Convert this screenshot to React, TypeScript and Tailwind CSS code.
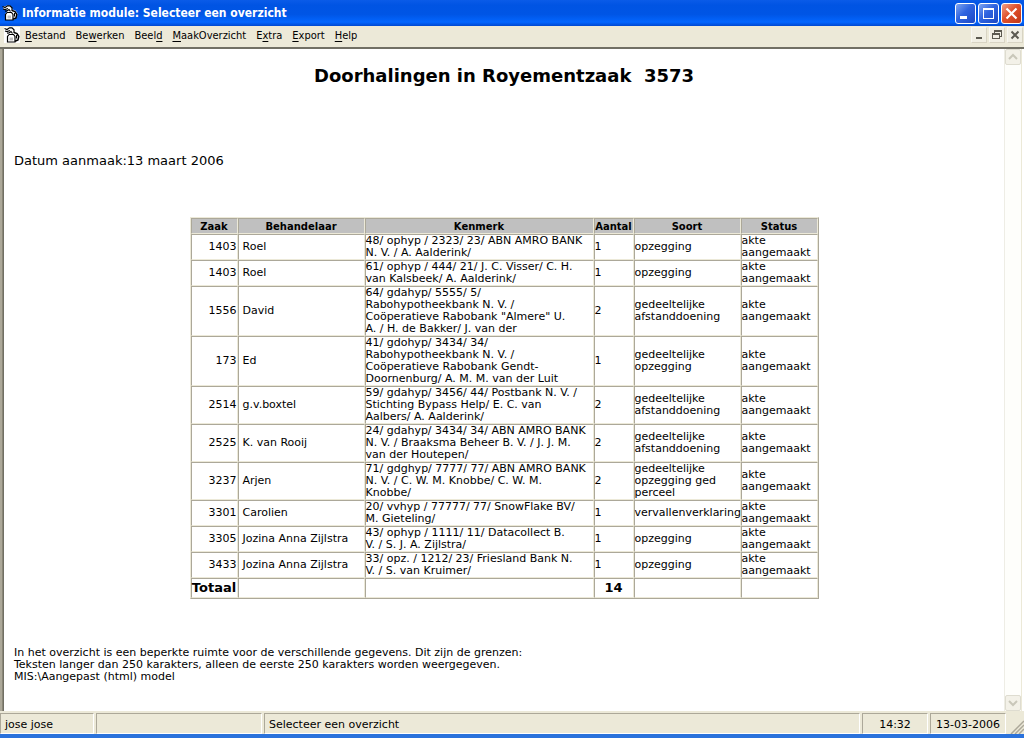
import React from "react";

const menus: [string, string, string][] = [
  ["", "B", "estand"],
  ["Be", "w", "erken"],
  ["Beel", "d", ""],
  ["", "M", "aakOverzicht"],
  ["E", "x", "tra"],
  ["", "E", "xport"],
  ["", "H", "elp"],
];

type Row = [string, string, string[], string, string[]];

const rows: Row[] = [
  ["1403", "Roel", ["48/ ophyp / 2323/ 23/ ABN AMRO BANK", "N. V. / A. Aalderink/"], "1", ["opzegging"]],
  ["1403", "Roel", ["61/ ophyp / 444/ 21/ J. C. Visser/ C. H.", "van Kalsbeek/ A. Aalderink/"], "1", ["opzegging"]],
  ["1556", "David", ["64/ gdahyp/ 5555/ 5/", "Rabohypotheekbank N. V. /", "Coöperatieve Rabobank \"Almere\" U.", "A. / H. de Bakker/ J. van der"], "2", ["gedeeltelijke", "afstanddoening"]],
  ["173", "Ed", ["41/ gdohyp/ 3434/ 34/", "Rabohypotheekbank N. V. /", "Coöperatieve Rabobank Gendt-", "Doornenburg/ A. M. M. van der Luit"], "1", ["gedeeltelijke", "opzegging"]],
  ["2514", "g.v.boxtel", ["59/ gdahyp/ 3456/ 44/ Postbank N. V. /", "Stichting Bypass Help/ E. C. van", "Aalbers/ A. Aalderink/"], "2", ["gedeeltelijke", "afstanddoening"]],
  ["2525", "K. van Rooij", ["24/ gdahyp/ 3434/ 34/ ABN AMRO BANK", "N. V. / Braaksma Beheer B. V. / J. J. M.", "van der Houtepen/"], "2", ["gedeeltelijke", "afstanddoening"]],
  ["3237", "Arjen", ["71/ gdghyp/ 7777/ 77/ ABN AMRO BANK", "N. V. / C. W. M. Knobbe/ C. W. M.", "Knobbe/"], "2", ["gedeeltelijke", "opzegging ged", "perceel"]],
  ["3301", "Carolien", ["20/ vvhyp / 77777/ 77/ SnowFlake BV/", "M. Gieteling/"], "1", ["vervallenverklaring"]],
  ["3305", "Jozina Anna Zijlstra", ["43/ ophyp / 1111/ 11/ Datacollect B.", "V. / S. J. A. Zijlstra/"], "1", ["opzegging"]],
  ["3433", "Jozina Anna Zijlstra", ["33/ opz. / 1212/ 23/ Friesland Bank N.", "V. / S. van Kruimer/"], "1", ["opzegging"]],
];

function Lines({ items }: { items: string[] }) {
  return (
    <>
      {items.map((t) => (
        <span key={t} className="block">{t}</span>
      ))}
    </>
  );
}

function AppIcon() {
  return (
    <svg viewBox="0 0 16 16" className="block h-4 w-4 shrink-0" aria-hidden="true">
      <path d="M1 2l4-1.500h3l2 2 .5 2 3 1 2 3-.5 3.500-2 1.500-1 1.500H3V9l2-2V5H2z" fill="#fff" />
      <path d="M0.500 1.500L3 2.500 5.500 .8H8l2 2V6M1 4l2 .6 3-1.100M3 6.200l2-.2 2-1.500 1.500 2" fill="none" stroke="#000" strokeWidth="1.200" />
      <path d="M5 7.500L3.500 9.500V15H11V9.500L9.500 7.500H5" fill="#fff" stroke="#000" strokeWidth="1.200" />
      <path d="M5.500 10.500h3.500v3H5.500z" fill="#c0c0c0" />
      <path d="M10 5.500l3 1 1.800 3-.8 3.500-3 1.200" fill="none" stroke="#000" strokeWidth="1.500" />
      <path d="M12.500 8v3.500" stroke="#000" strokeWidth="1" />
    </svg>
  );
}

const capBtn = "flex h-[21px] w-[21px] items-center justify-center rounded-[3px] border border-white";
const mdiBtn = "flex h-4 w-4 items-center justify-center border border-[#f8f7f1] border-r-[#d8d4c4] border-b-[#d8d4c4] bg-[#f1efe4]";
const scrollBtn = "flex h-4 w-4 items-center justify-center rounded-[2px] border border-[#dedcd0] bg-[#f3f1e8]";
const cell = "border border-t-[#aca899] border-l-[#aca899] border-r-[#ece9d8] border-b-[#ece9d8] p-0";
const pane = "h-[21px] border border-t-[#aca899] border-l-[#aca899] border-r-[#fff] border-b-[#fff] px-1 leading-[21px] whitespace-nowrap";

export default function App() {
  return (
    <div className="flex min-h-screen flex-col bg-[#ece9d8] font-['DejaVu_Sans',Verdana,sans-serif] text-black">
      <header className="flex h-[26px] items-center bg-[linear-gradient(to_bottom,#0a5be8_0%,#0054e3_20%,#0055e5_55%,#0366ff_85%,#0048d0_100%)] px-[2px]">
        <AppIcon />
        <h1 className="ml-1 flex-1 font-['DejaVu_Sans_Condensed','Noto_Sans',sans-serif] text-[12px] font-bold whitespace-nowrap text-white">Informatie module: Selecteer een overzicht</h1>
        <div className="flex gap-[2px]">
          <button aria-label="Minimaliseren" className={`${capBtn} bg-[linear-gradient(135deg,#7ea4f0,#2f64e0_45%,#1c48c4)]`}>
            <svg viewBox="0 0 19 19" className="h-[19px] w-[19px]"><path d="M4 12h7v3H4z" fill="#fff" /></svg>
          </button>
          <button aria-label="Maximaliseren" className={`${capBtn} bg-[linear-gradient(135deg,#7ea4f0,#2f64e0_45%,#1c48c4)]`}>
            <svg viewBox="0 0 19 19" className="h-[19px] w-[19px]"><path d="M4 4h11v11H4zM5 6v8h9V6z" fill="#fff" fillRule="evenodd" /></svg>
          </button>
          <button aria-label="Sluiten" className={`${capBtn} bg-[linear-gradient(135deg,#f0a088,#e0512c_45%,#c03818)]`}>
            <svg viewBox="0 0 19 19" className="h-[19px] w-[19px]"><path d="M4.500 4.500l10 10M14.500 4.500l-10 10" stroke="#fff" strokeWidth="2.2" /></svg>
          </button>
        </div>
      </header>

      <div className="flex h-[21px] items-start pr-px pl-[4px]">
        <span className="mt-px bg-white"><AppIcon /></span>
        <nav className="ml-[5px] flex flex-1 gap-[10px] pt-[2px] font-['DejaVu_Sans_Condensed','Noto_Sans',sans-serif] text-[11px] leading-[16px]">
          {menus.map(([a, b, c]) => (
            <button key={a + b + c} className="whitespace-nowrap">
              {a}<span className="underline underline-offset-2">{b}</span>{c}
            </button>
          ))}
        </nav>
        <div className="flex gap-[2px] pt-px">
          <button aria-label="Venster minimaliseren" className={mdiBtn}>
            <svg viewBox="0 0 14 14" className="h-[14px] w-[14px]"><path d="M4 9h6v2H4z" fill="#5c5a50" /></svg>
          </button>
          <button aria-label="Venster herstellen" className={mdiBtn}>
            <svg viewBox="0 0 14 14" className="h-[14px] w-[14px]" shapeRendering="crispEdges"><path d="M4 2h8v7h-2V8h1V4H5v1H4zM2 5h8v6H2zM3 7v3h6V7z" fill="#5c5a50" fillRule="evenodd" /></svg>
          </button>
          <button aria-label="Venster sluiten" className={mdiBtn}>
            <svg viewBox="0 0 14 14" className="h-[14px] w-[14px]"><path d="M3.500 3.500l7 7M10.500 3.500l-7 7" stroke="#5c5a50" strokeWidth="2" /></svg>
          </button>
        </div>
      </div>

      <div className="flex flex-1 border-t-2 border-t-[#716f64] bg-white">
        <div className="w-1 border-r border-l-2 border-r-[#716f64] border-l-[#aca899] bg-[#8a8778]" />
        <main className="min-w-0 flex-1 px-[10px] pt-[15px] pb-[23px]">
          <h2 className="text-center text-[18px] leading-[24px] font-bold whitespace-pre">Doorhalingen in Royementzaak  3573</h2>
          <p className="mt-[64px] text-[13px] leading-[18px]">Datum aanmaak:13 maart 2006</p>

          <table className="mx-auto mt-[47px] w-[629px] table-fixed border-separate border-spacing-0 border border-t-[#ece9d8] border-r-[#aca899] border-b-[#aca899] border-l-[#ece9d8] text-[11px] leading-[12px]">
            <colgroup>
              <col className="w-[47px]" />
              <col className="w-[127px]" />
              <col className="w-[229px]" />
              <col className="w-[40px]" />
              <col className="w-[107px]" />
              <col className="w-[77px]" />
            </colgroup>
            <thead>
              <tr className="h-4 bg-[#c0c0c0] text-[10px]">
                {["Zaak", "Behandelaar", "Kenmerk", "Aantal", "Soort", "Status"].map((h) => (
                  <th key={h} scope="col" className={`${cell} pt-[2px] font-bold`}>{h}</th>
                ))}
              </tr>
            </thead>
            <tbody>
              {rows.map(([zaak, naam, kenmerk, aantal, soort]) => (
                <tr key={kenmerk[0]} className="whitespace-nowrap">
                  <td className={`${cell} text-right`}>{zaak}</td>
                  <td className={`${cell}`}><span className="pl-1">{naam}</span></td>
                  <td className={cell}><Lines items={kenmerk} /></td>
                  <td className={cell}>{aantal}</td>
                  <td className={cell}><Lines items={soort} /></td>
                  <td className={cell}><Lines items={["akte", "aangemaakt"]} /></td>
                </tr>
              ))}
            </tbody>
            <tfoot>
              <tr className="h-5 text-[13px] leading-[16px]">
                <th scope="row" className={`${cell} font-bold`}>Totaal</th>
                <td className={cell} />
                <td className={cell} />
                <td className={`${cell} text-center font-bold`}>14</td>
                <td className={cell} />
                <td className={cell} />
              </tr>
            </tfoot>
          </table>

          <p className="mt-12 text-[11px] leading-[12px]">
            In het overzicht is een beperkte ruimte voor de verschillende gegevens. Dit zijn de grenzen:<br />
            Teksten langer dan 250 karakters, alleen de eerste 250 karakters worden weergegeven.<br />
            MIS:\Aangepast (html) model
          </p>
        </main>
        <div className="flex w-[17px] flex-col justify-between border-l border-[#eeede5] bg-[#fefefb]">
          <button aria-label="Omhoog schuiven" className={scrollBtn}>
            <svg viewBox="0 0 10 10" className="h-[10px] w-[10px]"><path d="M1 7l4-4 4 4" fill="none" stroke="#c9c7ba" strokeWidth="2" /></svg>
          </button>
          <button aria-label="Omlaag schuiven" className={scrollBtn}>
            <svg viewBox="0 0 10 10" className="h-[10px] w-[10px]"><path d="M1 3l4 4 4-4" fill="none" stroke="#c9c7ba" strokeWidth="2" /></svg>
          </button>
        </div>
        <div className="w-[3px] border-l border-[#ece9d8] bg-white" />
      </div>

      <footer className="flex h-[27px] items-start gap-[2px] border-b-4 border-[#2a72dc] pt-[2px] text-[11px]">
        <div className={`${pane} w-[94px]`}>jose jose</div>
        <div className={`${pane} w-[166px]`} />
        <div className={`${pane} flex-1`}>Selecteer een overzicht</div>
        <div className={`${pane} w-[66px] text-center`}>14:32</div>
        <div className={`${pane} w-[76px] text-center`}>13-03-2006</div>
        <svg viewBox="0 0 16 16" className="mt-[5px] h-4 w-4" aria-hidden="true"><path d="M3 16L16 3M7 16l9-9M11 16l5-5" stroke="#aca899" strokeWidth="1.5" /></svg>
      </footer>
    </div>
  );
}
